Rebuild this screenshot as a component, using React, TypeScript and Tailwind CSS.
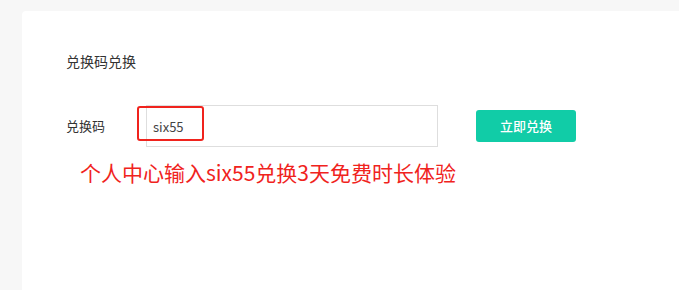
export default function App() {
  return (
    <div
      className="w-[679px] h-[290px] overflow-hidden bg-[#f7f7f7] pl-[22px] pt-[11px]"
      style={{ fontFamily: '"Noto Sans CJK SC", "Microsoft YaHei", sans-serif' }}
    >
      <div className="h-[300px] bg-white rounded-tl-[4px] pl-[44px] pt-[40px]">
        <h2 className="text-[14px] leading-[20px] text-[#333]">兑换码兑换</h2>

        <div className="mt-[34px] flex items-center">
          <label className="w-[80px] text-[13px] text-[#333]">兑换码</label>
          <div className="relative">
            <input
              defaultValue="six55"
              className="w-[292px] h-[42px] border border-[#dedede] px-[6px] text-[13px] text-[#444] outline-none"
            />
            <div className="absolute left-[-9px] top-[1px] w-[67px] h-[35px] border-2 border-[#f0231d] rounded-[3px]" />
          </div>
          <button className="ml-[38px] w-[100px] h-[32px] rounded-[3px] bg-[#11cca7] text-white text-[13px] font-medium">
            立即兑换
          </button>
        </div>

        <p className="mt-[11px] ml-[14px] text-[21px] leading-[28px] text-[#f0231d]">
          个人中心输入six55兑换3天免费时长体验
        </p>
      </div>
    </div>
  );
}
